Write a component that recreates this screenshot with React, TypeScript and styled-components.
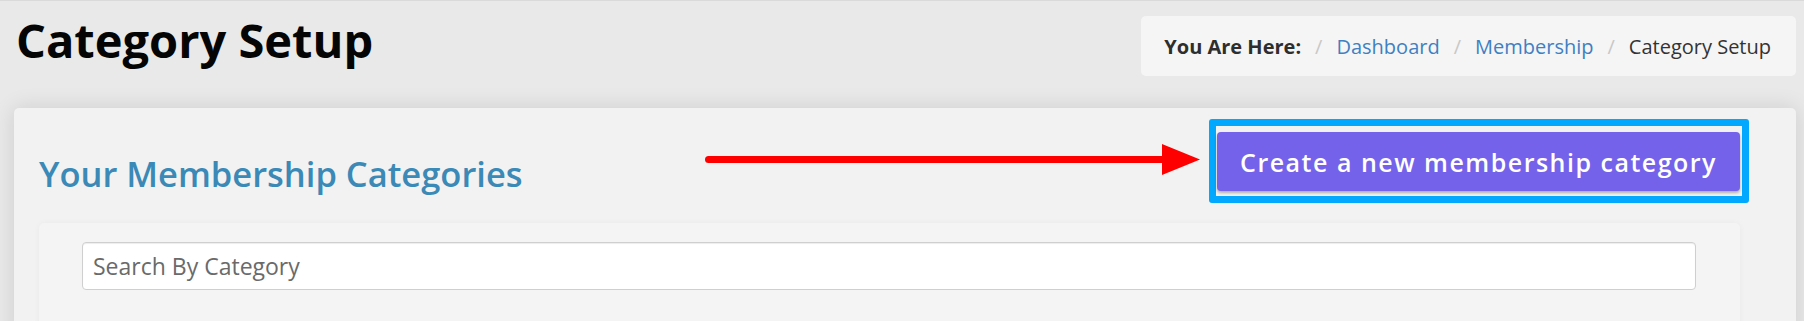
import React from 'react';
import styled, { createGlobalStyle } from 'styled-components';

const GlobalStyle = createGlobalStyle`
  html, body {
    margin: 0;
    padding: 0;
    overflow: hidden;
    background: #e9e9e9;
    font-family: 'Open Sans', 'Noto Sans', sans-serif;
  }
  * {
    box-sizing: border-box;
  }
`;

const Page = styled.div`
  min-height: 321px;
  border-top: 1px solid #dadada;
  background: #e9e9e9;
`;

const Header = styled.header`
  display: flex;
  justify-content: space-between;
  align-items: flex-start;
  padding: 15px 8px 0 16px;
`;

const Title = styled.h1`
  margin: 0;
  font-size: 47px;
  line-height: 48px;
  font-weight: 700;
  color: #050505;
`;

const Breadcrumb = styled.nav`
  display: flex;
  align-items: center;
  height: 60px;
  padding: 0 25px 0 23px;
  background: #f5f5f5;
  border-radius: 5px;
  font-size: 20px;
  color: #333;
`;

const Label = styled.span`
  font-weight: 700;
  color: #2e2e2e;
`;

const Separator = styled.span`
  margin: 0 14px;
  color: #c8c8c8;
`;

const Crumb = styled.a`
  color: #3f7fc2;
  text-decoration: none;
`;

const Current = styled.span`
  color: #333;
`;

const Card = styled.section`
  margin: 32px 8px 0 14px;
  padding: 11px 47px 0 25px;
  background: #f2f2f2;
  border-radius: 5px;
  box-shadow: 0 0 22px rgba(0, 0, 0, 0.12);
`;

const CardHead = styled.div`
  display: flex;
  align-items: flex-start;
`;

const Heading = styled.h2`
  margin: 32px 0 0;
  font-size: 34.5px;
  line-height: 46px;
  font-weight: 600;
  color: #3a89b6;
`;

const Arrow = styled.svg`
  flex: none;
  margin: 25px 9px 0 auto;
`;

const Highlight = styled.div`
  padding: 6px 2px 5px 1px;
  border: 7px solid #01a8fe;
  border-radius: 3px;
`;

const PrimaryButton = styled.button`
  display: flex;
  align-items: center;
  height: 59px;
  padding: 0 23px;
  border: none;
  border-radius: 4px;
  background: #7462eb;
  box-shadow: 0 2px 3px rgba(0, 0, 0, 0.28);
  color: #fff;
  font-family: 'Open Sans', 'Noto Sans', sans-serif;
  font-size: 25px;
  font-weight: 600;
  letter-spacing: 1.5px;
  cursor: pointer;
`;

const Panel = styled.div`
  min-height: 120px;
  margin: 20px 9px 0 0;
  padding: 19px 44px 0 43px;
  background: #f4f4f4;
  border-radius: 5px;
  box-shadow: 0 0 6px rgba(0, 0, 0, 0.04);
`;

const SearchInput = styled.input`
  display: block;
  width: 100%;
  height: 48px;
  padding: 0 10px;
  border: 1px solid #cfcfcf;
  border-radius: 4px;
  background: #fff;
  box-shadow: inset 0 1px 1px rgba(0, 0, 0, 0.075);
  font-family: 'Open Sans', 'Noto Sans', sans-serif;
  font-size: 23px;
  color: #555;

  &::placeholder {
    color: #6a6a6a;
  }
`;

const App: React.FC = () => {
  return (
    <>
      <GlobalStyle />
      <Page>
        <Header>
          <Title>Category Setup</Title>
          <Breadcrumb>
            <Label>You Are Here:</Label>
            <Separator>/</Separator>
            <Crumb href="#">Dashboard</Crumb>
            <Separator>/</Separator>
            <Crumb href="#">Membership</Crumb>
            <Separator>/</Separator>
            <Current>Category Setup</Current>
          </Breadcrumb>
        </Header>

        <Card>
          <CardHead>
            <Heading>Your Membership Categories</Heading>
            <Arrow width="495" height="31" viewBox="0 0 495 31">
              <line x1="3.5" y1="15.5" x2="460" y2="15.5" stroke="#ff0000" strokeWidth="7" strokeLinecap="round" />
              <polygon points="457,0 495,15.5 457,31" fill="#ff0000" />
            </Arrow>
            <Highlight>
              <PrimaryButton>Create a new membership category</PrimaryButton>
            </Highlight>
          </CardHead>

          <Panel>
            <SearchInput placeholder="Search By Category" />
          </Panel>
        </Card>
      </Page>
    </>
  );
};

export default App;
